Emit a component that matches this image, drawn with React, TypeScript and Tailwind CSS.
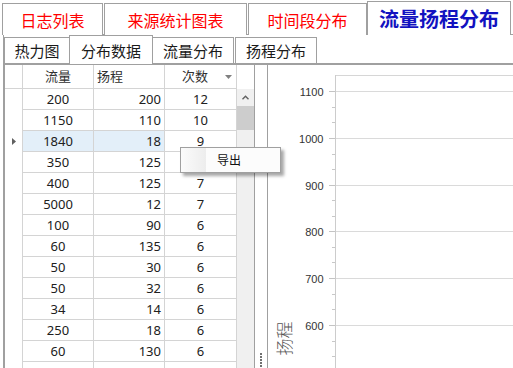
import React from "react";

const rows: [string, string, string][] = [
  ["200", "200", "12"],
  ["1150", "110", "10"],
  ["1840", "18", "9"],
  ["350", "125", "7"],
  ["400", "125", "7"],
  ["5000", "12", "7"],
  ["100", "90", "6"],
  ["60", "135", "6"],
  ["50", "30", "6"],
  ["50", "32", "6"],
  ["34", "14", "6"],
  ["250", "18", "6"],
  ["60", "130", "6"],
  ["50", "150", "6"],
];

const majors = [
  { v: "1100", y: 26.5 },
  { v: "1000", y: 73.5 },
  { v: "900", y: 120.5 },
  { v: "800", y: 166.5 },
  { v: "700", y: 213.5 },
  { v: "600", y: 260.5 },
  { v: "500", y: 307.5 },
];

function Chart() {
  const minors: number[] = [];
  for (let i = 0; i < majors.length - 1; i++) {
    const a = majors[i].y;
    const b = majors[i + 1].y;
    const d = (b - a) / 3;
    minors.push(Math.round(a + d - 0.5) + 0.5, Math.round(a + 2 * d - 0.5) + 0.5);
  }
  return (
    <svg width="245" height="304" className="block">
      <line x1="67.5" y1="10.5" x2="245" y2="10.5" stroke="#d6d6d6" strokeWidth="1" />
      <line x1="67.5" y1="10" x2="67.5" y2="304" stroke="#cccccc" strokeWidth="1" />
      {majors.map((m) => (
        <g key={m.v}>
          <line x1="68" y1={m.y} x2="245" y2={m.y} stroke="#dadada" strokeWidth="1" />
          <line x1="61" y1={m.y} x2="67" y2={m.y} stroke="#c4c4c4" strokeWidth="1" />
          <text
            x="55.5"
            y={m.y + 4}
            textAnchor="end"
            fontFamily="'Liberation Sans', Arial, sans-serif"
            fontSize="11"
            fill="#333333"
          >
            {m.v}
          </text>
        </g>
      ))}
      {minors.map((y, i) => (
        <line key={i} x1="64" y1={y} x2="67" y2={y} stroke="#c8c8c8" strokeWidth="1" />
      ))}
      <text
        x="15.5"
        y="273.5"
        transform="rotate(-90 15.5 273.5)"
        textAnchor="middle"
        dominantBaseline="central"
        fontFamily="'Noto Sans CJK SC', sans-serif"
        fontSize="17"
        fontWeight="300"
        fill="#555555"
      >
        扬程
      </text>
    </svg>
  );
}

export default function App() {
  return (
    <div className="relative w-[513px] h-[368px] overflow-hidden bg-white font-['Noto_Sans','Noto_Sans_CJK_SC',sans-serif]">
      {/* outer tab strip */}
      <div className="flex items-end h-[35px] pl-[2px] font-['Noto_Sans_CJK_SC',sans-serif]">
        <div className="h-[32px] w-[101px] border border-b-0 border-[#a0a0a0] bg-white flex items-center justify-center text-[16px] leading-none text-[#ff0000]">
          日志列表
        </div>
        <div className="ml-[1px] h-[32px] w-[143px] border border-b-0 border-[#a0a0a0] bg-white flex items-center justify-center text-[16px] leading-none text-[#ff0000]">
          来源统计图表
        </div>
        <div className="ml-[1px] h-[32px] w-[119px] border border-b-0 border-[#a0a0a0] bg-white flex items-center justify-center text-[16px] leading-none text-[#ff0000]">
          时间段分布
        </div>
        <div className="relative z-10 h-[34px] w-[144px] border border-b-0 border-[#a0a0a0] bg-white flex items-center justify-center text-[20px] leading-none font-bold text-[#1212c0]">
          流量扬程分布
        </div>
      </div>

      {/* outer page */}
      <div className="-mt-px ml-[3px] h-[334px] border-t border-l border-[#a0a0a0] flex flex-col">
        {/* inner tab strip */}
        <div className="flex items-end h-[29px] font-['Noto_Sans_CJK_SC',sans-serif] text-[15px] leading-none text-[#1a1a1a]">
          <div className="h-[27px] w-[66px] border border-b-0 border-[#a0a0a0] bg-white flex items-center justify-center pb-[1px]">
            热力图
          </div>
          <div className="relative z-10 -ml-px h-[29px] w-[84px] border border-b-0 border-[#a0a0a0] bg-white flex items-center justify-center pt-[1px]">
            分布数据
          </div>
          <div className="-ml-px h-[27px] w-[82px] border border-b-0 border-[#a0a0a0] bg-white flex items-center justify-center pb-[1px]">
            流量分布
          </div>
          <div className="ml-px h-[27px] w-[82px] border border-b-0 border-[#a0a0a0] bg-white flex items-center justify-center pb-[1px]">
            扬程分布
          </div>
        </div>

        {/* inner page */}
        <div className="-mt-px flex-1 flex border-t-2 border-l border-[#a0a0a0] min-h-0">
          {/* grid */}
          <div className="w-[250px] border-r border-[#a0a0a0] flex flex-col text-[13px] leading-none text-[#202020]">
            <div className="flex h-[24px] shrink-0">
              <div className="w-[18px] border-r border-b border-[#d4d4d4]" />
              <div className="w-[71px] border-r border-b border-[#d4d4d4] flex items-center justify-center text-[#303030]">
                流量
              </div>
              <div className="w-[71px] border-r border-b border-[#d4d4d4] flex items-center pl-[3px] text-[#303030]">
                扬程
              </div>
              <div className="w-[72px] border-r border-b border-[#d4d4d4] flex items-center text-[#303030]">
                <span className="flex-1 text-center">次数</span>
                <svg width="7" height="4" className="mr-[4px] block" viewBox="0 0 7 4">
                  <polygon points="0,0 7,0 3.5,4" fill="#808080" />
                </svg>
              </div>
              <div className="w-[17px]" />
            </div>
            <div className="flex flex-1 min-h-0">
              <div className="w-[232px] flex flex-col">
                {rows.map((r, i) => {
                  const sel = i === 2;
                  return (
                    <div key={i} className="flex h-[21px] shrink-0">
                      <div className="w-[18px] border-r border-[#d4d4d4] flex items-center justify-center">
                        {sel && (
                          <svg width="4" height="7" viewBox="0 0 4 7" className="block">
                            <polygon points="0,0 4,3.5 0,7" fill="#606060" />
                          </svg>
                        )}
                      </div>
                      <div
                        className={
                          "w-[71px] border-r border-b border-[#d4d4d4] flex items-center justify-center " +
                          (sel ? "bg-[#e3eff9]" : "bg-white")
                        }
                      >
                        {r[0]}
                      </div>
                      <div
                        className={
                          "w-[71px] border-r border-b border-[#d4d4d4] flex items-center justify-end pr-[3px] " +
                          (sel ? "bg-[#e3eff9]" : "bg-white")
                        }
                      >
                        {r[1]}
                      </div>
                      <div className="w-[72px] border-r border-b border-[#d4d4d4] flex items-center justify-center">
                        {r[2]}
                      </div>
                    </div>
                  );
                })}
              </div>
              <div className="w-[17px] bg-[#f0f0f0] flex flex-col">
                <div className="h-[17px] flex items-center justify-center">
                  <svg width="7" height="5" viewBox="0 0 7 5" className="block">
                    <polyline points="0.5,4.2 3.5,1.2 6.5,4.2" fill="none" stroke="#606060" strokeWidth="1.4" />
                  </svg>
                </div>
                <div className="h-[24px] bg-[#cdcdcd]" />
              </div>
            </div>
          </div>

          {/* splitter */}
          <div className="w-[12px] flex flex-col items-center pt-[288px] gap-[1px]">
            <div className="w-[2px] h-[2px] bg-[#707070]" />
            <div className="w-[2px] h-[2px] bg-[#707070]" />
            <div className="w-[2px] h-[2px] bg-[#707070]" />
            <div className="w-[2px] h-[2px] bg-[#707070]" />
            <div className="w-[2px] h-[2px] bg-[#707070]" />
          </div>

          {/* chart */}
          <div className="flex-1 border-l border-[#a0a0a0] overflow-hidden">
            <Chart />
          </div>
        </div>
      </div>

      {/* context menu */}
      <div className="absolute left-[180px] top-[147px] w-[101px] h-[26px] border border-[#a0a0a0] bg-[#fcfcfc] shadow-[3px_3px_3px_rgba(0,0,0,0.35)] flex">
        <div className="w-[25px] h-full bg-linear-to-r from-[#fbfbfb] to-[#ededed]" />
        <div className="flex items-center pl-[11px] text-[12px] leading-none text-[#111] font-['Noto_Sans_CJK_SC',sans-serif]">
          导出
        </div>
      </div>
    </div>
  );
}
